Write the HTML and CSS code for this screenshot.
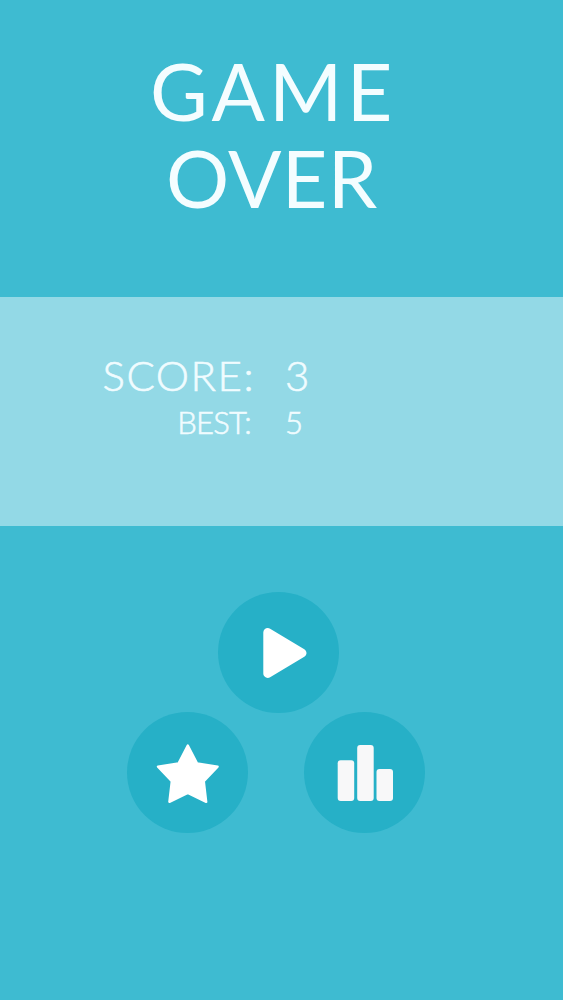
FILE: index.html
```html
<!DOCTYPE html>
<html lang="en">
<head>
    <meta charset="UTF-8">
    <meta name="viewport" content="width=device-width, initial-scale=1.0">
    <title>Game Over</title>
    <link rel="stylesheet" href="styles.css">
</head>
<body>
    <h1 class="title">
        <span class="game">GAME</span>
        <span class="over">OVER</span>
    </h1>

    <div class="scores">
        <div class="row score">
            <span class="label">SCORE:</span>
            <span class="value">3</span>
        </div>
        <div class="row best">
            <span class="label">BEST:</span>
            <span class="value">5</span>
        </div>
    </div>

    <div class="buttons">
        <button class="btn play" aria-label="Play">
            <svg viewBox="0 0 121 121">
                <path d="M49.8 40.5 L84 61 L49.8 81.5 Z" stroke="#fff" stroke-width="9" stroke-linejoin="round"/>
            </svg>
        </button>
        <div class="btnrow">
            <button class="btn" aria-label="Rate">
                <svg viewBox="0 0 121 121">
                    <path d="M60.8 33.5 L70 51.4 L90.6 54.6 L76.8 69.3 L79.2 89.8 L60.8 80.9 L42.4 89.8 L44.8 69.3 L31 54.6 L51.6 51.4 Z" stroke="#fff" stroke-width="2.4" stroke-linejoin="round"/>
                </svg>
            </button>
            <button class="btn" aria-label="Leaderboard">
                <svg viewBox="0 0 121 121" class="bars">
                    <rect x="33.7" y="48.2" width="16.5" height="40.8" rx="3"/>
                    <rect x="53.2" y="33" width="16.5" height="56" rx="3"/>
                    <rect x="72.5" y="57" width="16.5" height="32" rx="3"/>
                </svg>
            </button>
        </div>
    </div>
</body>
</html>
```
FILE: styles.css
```css
body{
    margin: 0;
    height: 1000px;
    background-color: #3ebbd1;
    color: white;
    font-family: Lato, "Liberation Sans", sans-serif;
    font-weight: 400;
    overflow: hidden;
}
.title{
    box-sizing: border-box;
    height: 297px;
    margin: 0;
    padding-top: 47px;
    font-size: 79px;
    font-weight: 400;
    line-height: 87px;
    color: #f4fdff;
}
.title span{
    display: block;
    width: max-content;
}
.game{
    margin-left: 150px;
    letter-spacing: 4.2px;
}
.over{
    margin-left: 166px;
    letter-spacing: 0.3px;
}
.scores{
    box-sizing: border-box;
    height: 229px;
    padding-top: 52px;
    background-color: #93d9e6;
    color: #f0fcff;
}
.row{
    display: grid;
    grid-template-columns: 255px 1fr;
    column-gap: 30px;
    font-weight: 300;
    -webkit-text-stroke: 0.6px #f0fcff;
}
.label{
    text-align: right;
}
.score{
    font-size: 42px;
    line-height: 52px;
}
.score .label{
    letter-spacing: 1.5px;
}
.best{
    font-size: 31px;
    line-height: 43px;
}
.best .label{
    padding-right: 4px;
    letter-spacing: -0.8px;
}
.buttons{
    padding-top: 66px;
}
.btn{
    display: block;
    width: 121px;
    height: 121px;
    padding: 0;
    border: none;
    border-radius: 50%;
    background-color: #26b0c7;
}
.btn svg{
    display: block;
    width: 121px;
    height: 121px;
    fill: white;
}
.btn .bars{
    fill: #f8f8f9;
}
.play{
    margin-left: 218px;
}
.btnrow{
    display: flex;
    gap: 56px;
    margin-top: -1px;
    padding-left: 127px;
}
```
